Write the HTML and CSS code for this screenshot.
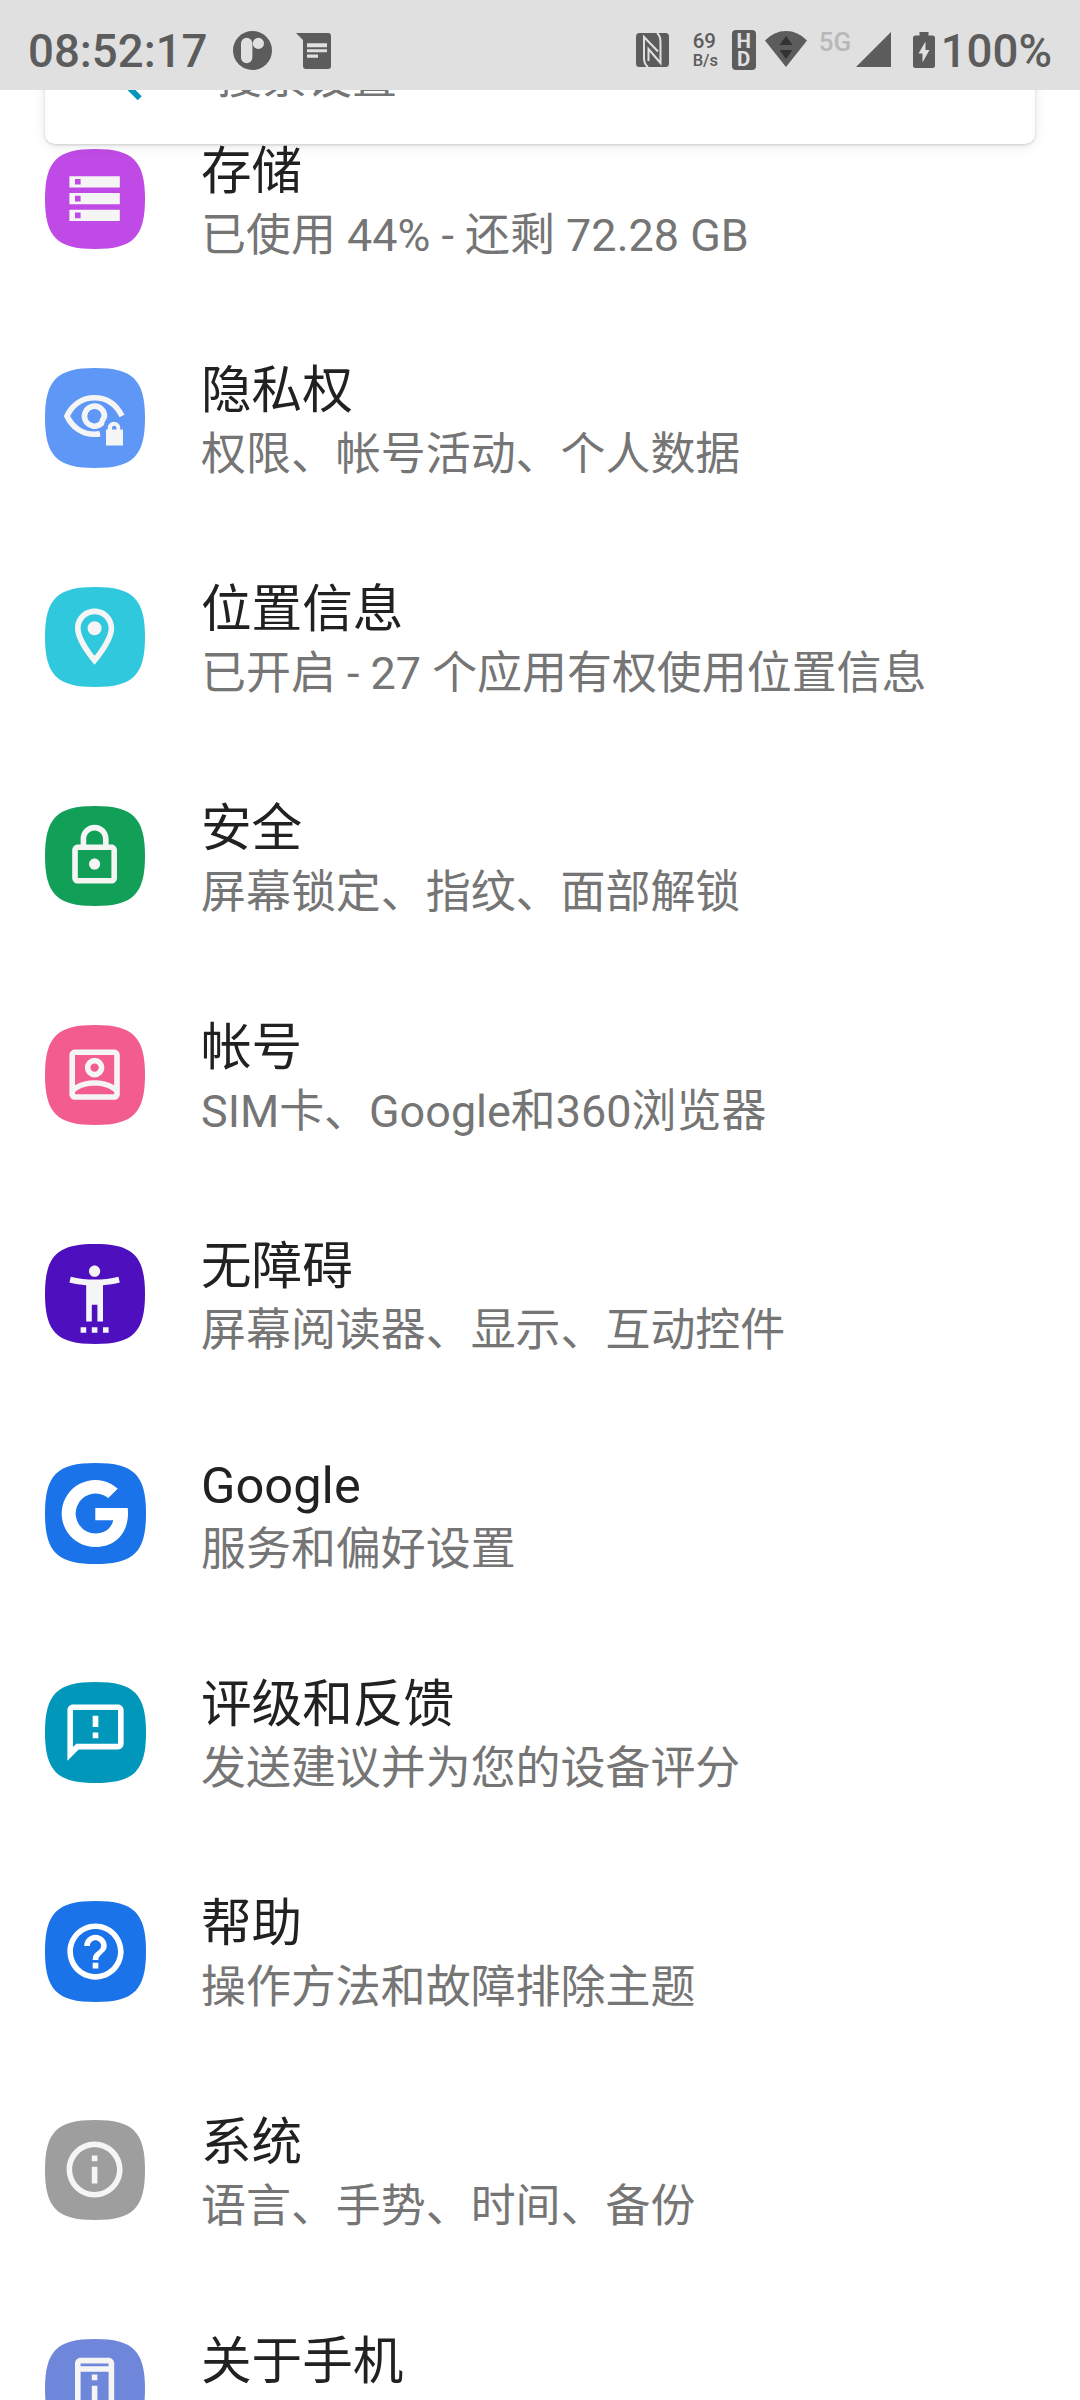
FILE: index.html
```html
<!DOCTYPE html>
<html lang="zh-CN">
<head>
<meta charset="utf-8">
<title>设置</title>
<link rel="stylesheet" href="styles.css">
</head>
<body>
<svg class="defs" width="0" height="0" aria-hidden="true">
  <symbol id="tile" viewBox="0 0 100 100"><path d="M50 0C88 0 100 12 100 50S88 100 50 100 0 88 0 50 12 0 50 0Z"/></symbol>
</svg>

<div class="screen">
  <header class="status">
    <span class="clock">08:52:17</span>
    <svg class="st-p" width="39" height="39" viewBox="0 0 39 39"><circle cx="19.5" cy="19.5" r="19.5" fill="#5c5c5c"/><rect x="8" y="6.8" width="11.4" height="25.4" rx="5.7" fill="#e0e0e0"/><circle cx="25.4" cy="12.4" r="5.6" fill="#e0e0e0"/></svg>
    <svg class="st-msg" width="35" height="36" viewBox="0 0 35 36"><path d="M0 0H32Q35 0 35 3V33Q35 36 32 36H10Q7 36 7 33V7Z" fill="#5c5c5c"/><path d="M11 10.3h20v4H11zM11 16.3h20v3H11zM11 21.6h11v3.200H11z" fill="#e0e0e0"/></svg>
    <span class="spacer"></span>
    <svg class="st-nfc" width="33" height="34" viewBox="0 0 33 34"><rect width="33" height="34" rx="3.500" fill="#5c5c5c"/><path d="M12 34Q8 31 8 25V4L22 18.500M21 0Q24.500 3 24.500 9V30L12.500 16V28" fill="none" stroke="#e0e0e0" stroke-width="2"/></svg>
    <span class="speed"><b>69</b><i>B/s</i></span>
    <span class="hd"><b>H</b><b>D</b></span>
    <svg class="st-wifi" width="42" height="36" viewBox="0 0 42 36"><path d="M0 9.500Q9 0 21 0T42 9.500L21 36Z" fill="#5c5c5c"/><path d="M21 5L27.500 14H14.500ZM21 28L14.500 19H27.500Z" fill="#333"/></svg>
    <span class="net">5G</span>
    <svg class="st-sig" width="35" height="35" viewBox="0 0 35 35"><path d="M35 0V35H0Z" fill="#5c5c5c"/></svg>
    <svg class="st-bat" width="22" height="36" viewBox="0 0 22 36"><path d="M6.500 0H15.500V3.500H19.500Q22 3.500 22 6V33.500Q22 36 19.500 36H2.500Q0 36 0 33.500V6Q0 3.500 2.500 3.500H6.500Z" fill="#5c5c5c"/><path d="M12.500 9.500V18H16.500L9.500 30.500V21.500H5.500Z" fill="#e0e0e0"/></svg>
    <span class="pct">100%</span>
  </header>

  <div class="search">
    <svg width="67.5" height="67.5" viewBox="0 0 24 24"><path fill="#0097ba" d="M20 11H7.830l5.590-5.590L12 4l-8 8 8 8 1.410-1.410L7.830 13H20z"/></svg>
    <span>搜索设置</span>
  </div>

  <main class="list">
    <section class="row">
      <svg class="icon storage" viewBox="0 0 100 100"><use href="#tile"/><path class="g" transform="translate(16 16) scale(2.8)" d="M3 20h18v-4H3v4zm2-3h2v2H5v-2zM3 4v4h18V4H3zm4 3H5V5h2v2zm-4 7h18v-4H3v4zm2-3h2v2H5v-2z"/></svg>
      <div class="text"><h2>存储</h2><p>已使用 44% - 还剩 72.28 GB</p></div>
    </section>
    <section class="row">
      <svg class="icon privacy" viewBox="0 0 100 100"><use href="#tile"/><g class="ln"><path d="M77 48C71 36 61 29.800 49.500 29.800 37 29.800 27 37 22 48 27 59 37 66.300 49.500 66.300 51.500 66.300 53.500 66.100 55 65.800"/><path d="M56.500 55.300A10 10 0 1 1 59.300 50"/><path d="M59.300 49Q57 52 56 57"/></g><path class="g" d="M61 61.500h1.800v-1.500a6.200 6.200 0 0 1 12.400 0v1.500h2.800v16H61zM67 61.500h4.500v-1.500a2.250 2.250 0 0 0-4.500 0z"/></svg>
      <div class="text"><h2>隐私权</h2><p>权限、帐号活动、个人数据</p></div>
    </section>
    <section class="row">
      <svg class="icon location" viewBox="0 0 100 100"><use href="#tile"/><path class="g" transform="translate(16 16) scale(2.8)" d="M12 2C8.130 2 5 5.130 5 9c0 5.250 7 13 7 13s7-7.750 7-13c0-3.870-3.130-7-7-7zM7 9c0-2.760 2.240-5 5-5s5 2.240 5 5c0 2.880-2.880 7.190-5 9.880C9.920 16.210 7 11.850 7 9zM12 6.500a2.500 2.500 0 1 0 0 5 2.500 2.500 0 0 0 0-5z"/></svg>
      <div class="text"><h2>位置信息</h2><p>已开启 - 27 个应用有权使用位置信息</p></div>
    </section>
    <section class="row">
      <svg class="icon security" viewBox="0 0 100 100"><use href="#tile"/><path class="g" transform="translate(16 16) scale(2.8)" d="M18 8h-1V6c0-2.760-2.240-5-5-5S7 3.240 7 6v2H6c-1.100 0-2 .9-2 2v10c0 1.100.9 2 2 2h12c1.100 0 2-.9 2-2V10c0-1.100-.9-2-2-2zM9 6c0-1.660 1.340-3 3-3s3 1.340 3 3v2H9V6zm9 14H6V10h12v10zm-6-3c1.100 0 2-.9 2-2s-.9-2-2-2-2 .9-2 2 .9 2 2 2z"/></svg>
      <div class="text"><h2>安全</h2><p>屏幕锁定、指纹、面部解锁</p></div>
    </section>
    <section class="row">
      <svg class="icon account" viewBox="0 0 100 100"><use href="#tile"/><path class="g" transform="translate(16 16) scale(2.8)" fill-rule="evenodd" d="M19 3H5c-1.100 0-2 .9-2 2v14c0 1.100.9 2 2 2h14c1.100 0 2-.9 2-2V5c0-1.100-.9-2-2-2zM5 5h14v10.800C17 14.500 14.500 14 12 14s-5 .5-7 1.800zM5 19v-.8C6.800 16.700 9.300 16 12 16s5.200.7 7 2.200V19zM12 6a3.500 3.500 0 1 0 0 7 3.500 3.500 0 0 0 0-7zm0 2a1.500 1.500 0 1 1 0 3 1.500 1.500 0 0 1 0-3z"/></svg>
      <div class="text"><h2>帐号</h2><p>SIM卡、Google和360浏览器</p></div>
    </section>
    <section class="row">
      <svg class="icon a11y" viewBox="0 0 100 100"><use href="#tile"/><path class="g" transform="translate(16 16) scale(2.8)" d="M20.500 6c-2.610.7-5.670 1-8.500 1s-5.890-.3-8.500-1L3 8c1.860.5 4 .83 6 1v13h2v-6h2v6h2V9c2-.17 4.140-.5 6-1zM12 6c1.100 0 2-.9 2-2s-.9-2-2-2-2 .9-2 2 .9 2 2 2zM7 24h2v2H7zm4 0h2v2h-2zm4 0h2v2h-2z"/></svg>
      <div class="text"><h2>无障碍</h2><p>屏幕阅读器、显示、互动控件</p></div>
    </section>
    <section class="row">
      <svg class="icon gms" viewBox="0 0 101 101"><use href="#tile"/><path class="w" d="M72.700 25.700A33.500 33.500 0 1 0 50.500 84C70 84 83 70.500 83 50.500Q83 47.500 82.700 45H50.300V57.300H68.300C66.300 65.500 59.500 70.500 50.500 70.500A20 20 0 1 1 63.300 35Z"/></svg>
      <div class="text"><h2>Google</h2><p>服务和偏好设置</p></div>
    </section>
    <section class="row">
      <svg class="icon gms feedback" viewBox="0 0 101 101"><use href="#tile"/><path class="w" transform="translate(16.75 16.75) scale(2.8125)" d="M20 2H4c-1.100 0-1.990.9-1.990 2L2 22l4-4h14c1.100 0 2-.9 2-2V4c0-1.100-.9-2-2-2zm0 14H5.170l-1.170 1.170V4h16v12zm-9-4h2v2h-2zm0-6h2v4h-2z"/></svg>
      <div class="text"><h2>评级和反馈</h2><p>发送建议并为您的设备评分</p></div>
    </section>
    <section class="row">
      <svg class="icon gms" viewBox="0 0 101 101"><use href="#tile"/><path class="w" transform="translate(16.75 16.75) scale(2.8125)" d="M11 18h2v-2h-2v2zm1-16C6.480 2 2 6.480 2 12s4.480 10 10 10 10-4.480 10-10S17.520 2 12 2zm0 18c-4.410 0-8-3.590-8-8s3.590-8 8-8 8 3.590 8 8-3.590 8-8 8zm0-14c-2.210 0-4 1.790-4 4h2c0-1.100.9-2 2-2s2 .9 2 2c0 2-3 1.750-3 5h2c0-2.250 3-2.500 3-5 0-2.210-1.790-4-4-4z"/></svg>
      <div class="text"><h2>帮助</h2><p>操作方法和故障排除主题</p></div>
    </section>
    <section class="row">
      <svg class="icon system" viewBox="0 0 100 100"><use href="#tile"/><path class="g" transform="translate(16 16) scale(2.8)" d="M11 7h2v2h-2zm0 4h2v6h-2zm1-9C6.480 2 2 6.480 2 12s4.480 10 10 10 10-4.480 10-10S17.520 2 12 2zm0 18c-4.410 0-8-3.590-8-8s3.590-8 8-8 8 3.590 8 8-3.590 8-8 8z"/></svg>
      <div class="text"><h2>系统</h2><p>语言、手势、时间、备份</p></div>
    </section>
    <section class="row">
      <svg class="icon about" viewBox="0 0 100 100"><use href="#tile"/><path class="g" fill-rule="evenodd" transform="translate(16 16) scale(2.8)" d="M17 1H7c-1.100 0-2 .9-2 2v18c0 1.100.9 2 2 2h10c1.100 0 2-.9 2-2V3c0-1.100-.9-2-2-2zM7 3h10v1H7zM7 6h10v12H7zM7 20h10v1H7zM11 7h2v2h-2zm0 4h2v6h-2z"/></svg>
      <div class="text"><h2>关于手机</h2></div>
    </section>
  </main>
</div>
</body>
</html>
```
FILE: styles.css
```css
* { box-sizing: border-box; }
body {
  margin: 0;
  background: #fff;
  font-family: Roboto, "Noto Sans CJK SC", sans-serif;
}
.defs { position: absolute; }
.screen {
  position: relative;
  width: 1080px;
  height: 2400px;
  overflow: hidden;
  background: #fff;
}

/* status bar */
.status {
  position: relative;
  z-index: 2;
  display: flex;
  align-items: flex-start;
  height: 90px;
  padding: 31px 28px 0 28px;
  background: #e0e0e0;
  color: #5c5c5c;
}
.status svg { flex: none; }
.clock, .pct {
  font-size: 45.6px;
  font-weight: 500;
  line-height: 42px;
}
.clock { width: 205px; }
.st-msg { margin: 2px 0 0 24px; }
.spacer { flex: 1; }
.st-nfc { margin: 2px 24px 0 0; }
.speed {
  display: flex;
  flex-direction: column;
  width: 39px;
  font-weight: 500;
}
.speed b { font-size: 20.5px; line-height: 20px; font-weight: 500; }
.speed i { font-size: 16.5px; line-height: 19px; font-style: normal; }
.hd {
  display: flex;
  flex-direction: column;
  align-items: center;
  width: 24px;
  height: 40px;
  margin: -1px 9px 0 0;
  padding-top: 2px;
  border-radius: 4px;
  background: #5c5c5c;
  color: #e0e0e0;
}
.hd b { font-size: 20.5px; line-height: 18px; font-weight: 700; }
.net {
  width: 37px;
  margin-left: 12px;
  color: #b8b8b8;
  font-size: 26px;
  font-weight: 500;
  line-height: 23px;
}
.st-sig { margin: 1px 22px 0 0; }
.st-bat { margin: 1px 6px 0 0; }

/* search card, scrolled partly beneath the status bar */
.search {
  position: absolute;
  z-index: 1;
  top: 12px;
  left: 45px;
  display: flex;
  align-items: center;
  gap: 45.5px;
  width: 990px;
  height: 132px;
  padding-left: 59px;
  border-radius: 10px;
  background: #fff;
  box-shadow: 0 1px 3px rgba(0, 0, 0, .16), 0 2px 14px rgba(0, 0, 0, .09);
  color: #757575;
  font-size: 45px;
  line-height: 60px;
}
.search span { padding-top: 2px; }

/* settings list */
.row {
  display: flex;
  gap: 56px;
  height: 219px;
  padding: 51px 45px 0;
}
.icon { flex: none; width: 100px; height: 100px; margin-top: 8px; }
.icon.gms { width: 101px; height: 101px; margin-right: -1px; fill: #1a73e8; }
.icon.gms.feedback { fill: #0097ba; }
.icon .g { fill: #f5f5f5; }
.icon .w { fill: #fff; }
.icon .ln { fill: none; stroke: #f5f5f5; stroke-width: 5.6; }
.storage { fill: #c04ae6; }
.privacy { fill: #5e97f6; }
.location { fill: #30c8dc; }
.security { fill: #129f58; }
.account { fill: #f25c8e; }
.a11y { fill: #4e0fbe; }
.system { fill: #9e9e9e; }
.about { fill: #6f87da; }
.text h2 {
  margin: 0;
  color: #212121;
  font-size: 50.6px;
  font-weight: 400;
  line-height: 62px;
}
.text p {
  margin: 0;
  color: #757575;
  font-size: 44.95px;
  line-height: 65px;
}
```
